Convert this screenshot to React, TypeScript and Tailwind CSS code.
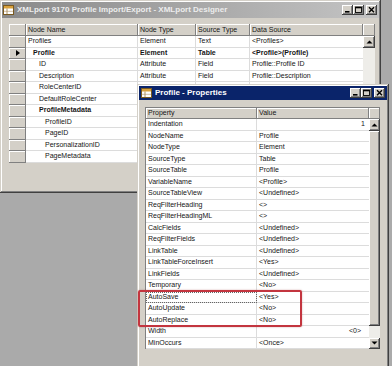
import React from "react";

const bevel =
  "bg-[#d4d0c8] shadow-[inset_-1px_-1px_0_#808080,inset_1px_1px_0_#ffffff]";
const btnBevel =
  "bg-[#d4d0c8] shadow-[inset_-1px_-1px_0_#404040,inset_1px_1px_0_#ffffff,inset_-2px_-2px_0_#808080]";
const winFrame =
  "bg-[#d4d0c8] shadow-[inset_-1px_-1px_0_#404040,inset_1px_1px_0_#d4d0c8,inset_-2px_-2px_0_#808080,inset_2px_2px_0_#ffffff]";

function WinIcon() {
  return (
    <svg width="11" height="10" viewBox="0 0 11 10" className="shrink-0">
      <rect x="0.5" y="0.5" width="10" height="9" fill="#ffffff" stroke="#7a5a20" />
      <rect x="1" y="1" width="9" height="2.5" fill="#d9a13c" />
      <line x1="4" y1="3.5" x2="4" y2="9" stroke="#9a7a3a" strokeWidth="0.8" />
      <line x1="1" y1="6.3" x2="10" y2="6.3" stroke="#b09060" strokeWidth="0.6" />
    </svg>
  );
}

function TitleButtons() {
  return (
    <div className="flex items-center">
      <div className={`${btnBevel} w-[11px] h-[10px] flex items-center justify-center`}>
        <svg width="11" height="10" viewBox="0 0 11 10">
          <rect x="3" y="6" width="4.5" height="1.6" fill="#000" />
        </svg>
      </div>
      <div className={`${btnBevel} w-[11px] h-[10px] flex items-center justify-center`}>
        <svg width="11" height="10" viewBox="0 0 11 10">
          <rect x="2.5" y="2" width="6" height="5.5" fill="none" stroke="#000" strokeWidth="0.9" />
          <rect x="2.5" y="2" width="6" height="1.3" fill="#000" />
        </svg>
      </div>
      <div className="w-[2px]" />
      <div className={`${btnBevel} w-[11px] h-[10px] flex items-center justify-center`}>
        <svg width="11" height="10" viewBox="0 0 11 10">
          <path d="M3 2.3 L8 7.3 M8 2.3 L3 7.3" stroke="#000" strokeWidth="1.4" />
        </svg>
      </div>
    </div>
  );
}

function UpArrow() {
  return (
    <svg width="7" height="4" viewBox="0 0 7 4">
      <path d="M0.5 3.5 L3.5 0.5 L6.5 3.5 Z" fill="#000" />
    </svg>
  );
}
function DownArrow() {
  return (
    <svg width="7" height="4" viewBox="0 0 7 4">
      <path d="M0.5 0.5 L3.5 3.5 L6.5 0.5 Z" fill="#000" />
    </svg>
  );
}

type BackRow = {
  name: string;
  indent: number;
  bold?: boolean;
  selected?: boolean;
  type: string;
  st: string;
  ds: string;
};

// Rows from RoleCenterID downward lie under the Properties window; only their names show.
const backRows: BackRow[] = [
  { name: "Profiles", indent: 0, type: "Element", st: "Text", ds: "<Profiles>" },
  { name: "Profile", indent: 1, bold: true, selected: true, type: "Element", st: "Table", ds: "<Profile>(Profile)" },
  { name: "ID", indent: 2, type: "Attribute", st: "Field", ds: "Profile::Profile ID" },
  { name: "Description", indent: 2, type: "Attribute", st: "Field", ds: "Profile::Description" },
  { name: "RoleCenterID", indent: 2, type: "", st: "", ds: "" },
  { name: "DefaultRoleCenter", indent: 2, type: "", st: "", ds: "" },
  { name: "ProfileMetadata", indent: 2, bold: true, type: "", st: "", ds: "" },
  { name: "ProfileID", indent: 3, type: "", st: "", ds: "" },
  { name: "PageID", indent: 3, type: "", st: "", ds: "" },
  { name: "PersonalizationID", indent: 3, type: "", st: "", ds: "" },
  { name: "PageMetadata", indent: 3, type: "", st: "", ds: "" },
];

const indentPad = ["pl-[2px]", "pl-[7px]", "pl-[13px]", "pl-[19px]"];

const props: { k: string; v: string; right?: string }[] = [
  { k: "Indentation", v: "1", right: "pr-[4px]" },
  { k: "NodeName", v: "Profile" },
  { k: "NodeType", v: "Element" },
  { k: "SourceType", v: "Table" },
  { k: "SourceTable", v: "Profile" },
  { k: "VariableName", v: "<Profile>" },
  { k: "SourceTableView", v: "<Undefined>" },
  { k: "ReqFilterHeading", v: "<>" },
  { k: "ReqFilterHeadingML", v: "<>" },
  { k: "CalcFields", v: "<Undefined>" },
  { k: "ReqFilterFields", v: "<Undefined>" },
  { k: "LinkTable", v: "<Undefined>" },
  { k: "LinkTableForceInsert", v: "<Yes>" },
  { k: "LinkFields", v: "<Undefined>" },
  { k: "Temporary", v: "<No>" },
  { k: "AutoSave", v: "<Yes>" },
  { k: "AutoUpdate", v: "<No>" },
  { k: "AutoReplace", v: "<No>" },
  { k: "Width", v: "<0>", right: "pr-[8px]" },
  { k: "MinOccurs", v: "<Once>" },
];

function BackWindow() {
  return (
    <div className={`absolute left-0 top-0 w-[381px] h-[193px] p-[2px] flex flex-col ${winFrame}`}>
      <div className="h-[16px] flex items-center bg-linear-to-r from-[#8a8a8a] to-[#c4c4c4] pl-[1px] pr-[2px]">
        <WinIcon />
        <span className="ml-[3px] text-[8px] font-bold text-[#ededed] leading-none whitespace-nowrap">
          XMLport 9170 Profile Import/Export - XMLport Designer
        </span>
        <div className="ml-auto">
          <TitleButtons />
        </div>
      </div>
      <div className="mt-[6px] ml-[7px] flex">
        <div className="flex flex-col w-[354px]">
          <div className="flex h-[12px] leading-[11px]">
            <div className={`${bevel} w-[17px]`} />
            <div className={`${bevel} w-[112px] pl-[2px]`}>Node Name</div>
            <div className={`${bevel} w-[58px] pl-[2px]`}>Node Type</div>
            <div className={`${bevel} w-[54px] pl-[2px]`}>Source Type</div>
            <div className={`${bevel} w-[113px] pl-[2px]`}>Data Source</div>
          </div>
          {backRows.map((r) => (
            <div key={r.name} className={`flex h-[11.5px] leading-[10px] ${r.bold ? "font-bold" : ""}`}>
              <div className={`${bevel} w-[17px] flex items-center justify-center`}>
                {r.selected && (
                  <svg width="4" height="6" viewBox="0 0 4 6">
                    <path d="M0 0 L4 3 L0 6 Z" fill="#000" />
                  </svg>
                )}
              </div>
              <div className={`w-[112px] bg-white border-r border-b border-[#dcdcdc] whitespace-nowrap overflow-hidden ${indentPad[r.indent]}`}>
                {r.name}
              </div>
              <div className="w-[58px] bg-white border-r border-b border-[#dcdcdc] pl-[2px] whitespace-nowrap overflow-hidden">
                {r.type}
              </div>
              <div className="w-[54px] bg-white border-r border-b border-[#dcdcdc] pl-[2px] whitespace-nowrap overflow-hidden">
                {r.st}
              </div>
              <div className="w-[113px] bg-white border-b border-[#dcdcdc] pl-[2px] whitespace-nowrap overflow-hidden">
                {r.ds}
              </div>
            </div>
          ))}
        </div>
        <div className="flex flex-col w-[12px]">
          <div className={`${bevel} h-[12px]`} />
          <div className={`${btnBevel} h-[11.5px] flex items-center justify-center`}>
            <UpArrow />
          </div>
          <div className="flex-1 bg-[#eeede9]" />
          <div className={`${btnBevel} h-[11.5px] flex items-center justify-center`}>
            <DownArrow />
          </div>
        </div>
      </div>
    </div>
  );
}

function FrontWindow() {
  return (
    <div className={`absolute left-[137px] top-[84px] w-[252px] h-[284px] p-[2px] flex flex-col ${winFrame}`}>
      <div className="h-[14px] flex items-center bg-[#0a246a] pl-[2px] pr-[2px]">
        <WinIcon />
        <span className="ml-[3px] text-[8px] font-bold text-white leading-none whitespace-nowrap">
          Profile - Properties
        </span>
        <div className="ml-auto">
          <TitleButtons />
        </div>
      </div>
      <div className="mt-[7px] ml-[6px] w-[235px] flex border-l border-t border-[#808080]">
        <div className="flex flex-col w-[223px]">
          <div className="flex h-[11px] leading-[10px]">
            <div className={`${bevel} w-[111px] pl-[2px]`}>Property</div>
            <div className={`${bevel} w-[112px] pl-[2px]`}>Value</div>
          </div>
          {props.map((p) => (
            <div key={p.k} className="flex h-[11.5px] leading-[10px]">
              <div
                className={`w-[111px] bg-white border-r border-b border-[#dcdcdc] pl-[2px] whitespace-nowrap ${
                  p.k === "AutoSave" ? "outline-1 outline-dotted outline-[#666] -outline-offset-1" : ""
                }`}
              >
                {p.k}
              </div>
              <div
                className={`w-[112px] bg-white border-b border-[#dcdcdc] whitespace-nowrap ${
                  p.right ? `text-right ${p.right}` : "pl-[2px]"
                }`}
              >
                {p.v}
              </div>
            </div>
          ))}
        </div>
        <div className="flex flex-col w-[12px]">
          <div className={`${bevel} h-[11px]`} />
          <div className={`${btnBevel} h-[11.5px] flex items-center justify-center`}>
            <UpArrow />
          </div>
          <div className={`${btnBevel} flex-1`} />
          <div className="h-[12px] bg-[#eeede9]" />
          <div className={`${btnBevel} h-[11.5px] flex items-center justify-center`}>
            <DownArrow />
          </div>
        </div>
      </div>
      <div className="absolute left-[1px] top-[206px] w-[164px] h-[37px] border-2 border-[#c3353f] rounded-[2px] shadow-[0_0_2px_rgba(120,0,0,0.35)]" />
    </div>
  );
}

export default function App() {
  return (
    <div className="relative w-[392px] h-[366px] overflow-hidden bg-[#aaaaaa] font-['Liberation_Sans',Arial,sans-serif] text-[7px] text-[#151515]">
      <BackWindow />
      <FrontWindow />
    </div>
  );
}
